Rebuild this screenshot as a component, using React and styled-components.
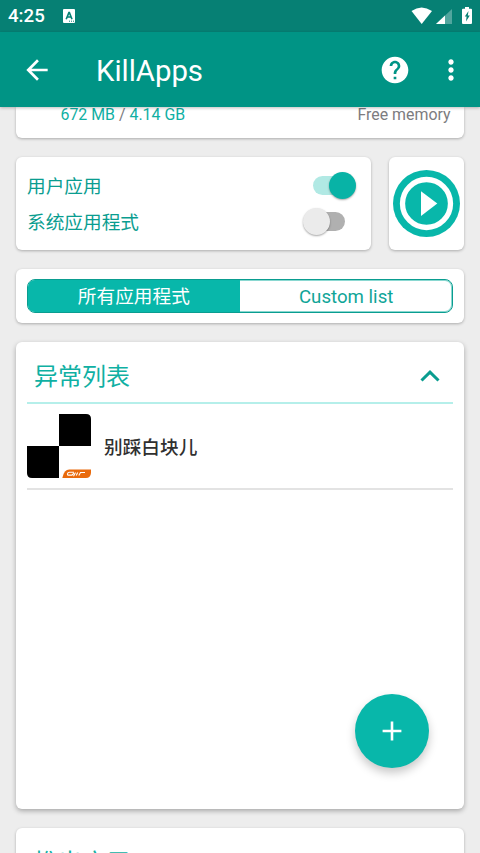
import styled, { createGlobalStyle } from 'styled-components';
import { MdArrowBack, MdHelp, MdMoreVert } from 'react-icons/md';

function App() {
  return (
    <>
      <GlobalStyle />
      <Screen>
        <StatusBar />
        <Toolbar />
        <Content>
          <MemoryCard>
            <p>
              <Teal>672 MB</Teal> / <Teal>4.14 GB</Teal>
            </p>
            <p>Free memory</p>
          </MemoryCard>
          <OptionsRow>
            <SwitchCard>
              <Option label="用户应用" checked />
              <Option label="系统应用程式" />
            </SwitchCard>
            <PlayCard>
              <PlayIcon />
            </PlayCard>
          </OptionsRow>
          <TabsCard>
            <Tabs>
              <Tab $active>所有应用程式</Tab>
              <Tab>Custom list</Tab>
            </Tabs>
          </TabsCard>
          <ListCard>
            <ListHeader>
              <h2>异常列表</h2>
              <ChevronIcon />
            </ListHeader>
            <ListItem>
              <PianoIcon />
              <ItemName>别踩白块儿</ItemName>
            </ListItem>
            <AddButton aria-label="Add">
              <svg width="20" height="20" viewBox="0 0 20 20">
                <path d="M10 .6v18.8M.6 10h18.8" stroke="#fff" strokeWidth="2.6" />
              </svg>
            </AddButton>
          </ListCard>
          <NextCard>
            <ListHeader>
              <h2>推出应用</h2>
            </ListHeader>
          </NextCard>
        </Content>
      </Screen>
    </>
  );
}

function StatusBar() {
  return (
    <StyledStatusBar>
      <Clock>4:25</Clock>
      <svg width="12" height="14" viewBox="0 0 12 14">
        <rect width="12" height="14" rx="1" fill="#fff" />
        <path
          d="M3.2 10.2 5.9 3.6h.5l2.6 6.6M4.2 8h3.8"
          fill="none"
          stroke="#068074"
          strokeWidth="1.6"
        />
        <path d="M6 12.2h1M8 12.2h1M10 12.2h1" stroke="#068074" />
      </svg>
      <StatusIcons>
        <svg width="61" height="20" viewBox="0 0 61 20">
          <path d="M.5 5Q10.500-2 21 5L10.700 18Z" fill="#fff" />
          <path d="M41 3v15H25Z" fill="#fff" opacity=".3" />
          <path d="M34 9.500V18h-9Z" fill="#fff" />
          <path
            d="M52 2.700h2V1h4v1.700h2q1 0 1 1V17q0 1-1 1h-8q-1 0-1-1V3.700q0-1 1-1Z"
            fill="#fff"
          />
          <path d="M57.500 5 53.800 10.500h1.800L55 15.500l3.800-6h-2Z" fill="#068074" />
        </svg>
      </StatusIcons>
    </StyledStatusBar>
  );
}

function Toolbar() {
  return (
    <StyledToolbar>
      <MdArrowBack size={32} />
      <h1>KillApps</h1>
      <MdHelp size={32} />
      <MdMoreVert size={32} />
    </StyledToolbar>
  );
}

function Option({ label, checked = false }) {
  return (
    <StyledOption>
      <OptionLabel>{label}</OptionLabel>
      <Switch $checked={checked}>
        <Thumb $checked={checked} />
      </Switch>
    </StyledOption>
  );
}

function PlayIcon() {
  return (
    <svg width="67" height="67" viewBox="0 0 67 67">
      <circle cx="33.500" cy="33.500" r="33.500" fill="#08b7aa" />
      <circle cx="33.500" cy="33.500" r="24" fill="#08b7aa" stroke="#fff" strokeWidth="5.300" />
      <path d="M28 21.300v24.600l16.300-12.300Z" fill="#fff" />
    </svg>
  );
}

function ChevronIcon() {
  return (
    <svg width="20" height="12" viewBox="0 0 20 12">
      <path d="m1.500 10.500 8.500-8.300 8.500 8.300" fill="none" stroke="#0a9d90" strokeWidth="3" />
    </svg>
  );
}

function PianoIcon() {
  return (
    <svg width="64" height="64" viewBox="0 0 64 64">
      <path d="M32 0h27q5 0 5 5v27H32Z" />
      <path d="M0 32h32v32H5q-5 0-5-5Z" />
      <path d="M35.300 64q1.800-8.400 7-8.400H64V59q-.5 5-5 5Z" fill="#e96a0c" />
      <path
        d="M47 58.300h-4.500q-1.700 0-2 1.500-.3 1.300 1.200 1.300h3.300l1.800-2M46.500 62.300l2-3.800M49.200 61.500l1.500-3M51.800 61.500l1.700-3H58"
        fill="none"
        stroke="#fff"
        strokeWidth="1.100"
      />
    </svg>
  );
}

const GlobalStyle = createGlobalStyle`
  * {
    box-sizing: border-box;
  }

  body,
  h1,
  h2,
  p {
    margin: 0;
  }

  body {
    font-family: Roboto, 'Noto Sans CJK SC', sans-serif;
    background-color: #ededed;
  }
`;

const Screen = styled.div`
  height: 853px;
  display: flex;
  flex-direction: column;
  overflow: hidden;
`;

const StyledStatusBar = styled.header`
  flex: none;
  height: 32px;
  padding: 0 8px;
  display: flex;
  align-items: center;
  background-color: #068074;
  color: #fff;
`;

const Clock = styled.span`
  width: 55px;
  padding-top: 1px;
  font-size: 18.67px;
  font-weight: 500;
  line-height: 31px;
`;

const StatusIcons = styled.div`
  height: 20px;
  margin-left: auto;
`;

const StyledToolbar = styled.nav`
  flex: none;
  z-index: 1;
  height: 74.67px;
  padding: 1px 13px 0 21.33px;
  display: flex;
  align-items: center;
  background-color: #009485;
  color: #fff;
  box-shadow: 0 1px 3px rgba(0, 0, 0, 0.25);

  h1 {
    flex: 1;
    margin-left: 42.67px;
    padding-top: 3px;
    font-size: 29.33px;
    font-weight: 400;
  }

  svg:last-child {
    margin-left: 24px;
  }
`;

const Content = styled.main`
  flex: 1;
  min-height: 0;
  padding: 0 16px;
  display: flex;
  flex-direction: column;
  gap: 18.67px;
`;

const Card = styled.section`
  flex: none;
  background-color: #fff;
  border-radius: 6px;
  box-shadow: 0 1px 3px rgba(0, 0, 0, 0.28);
`;

const MemoryCard = styled(Card)`
  height: 31.33px;
  padding: 0 13.5px 0 44.5px;
  display: flex;
  justify-content: space-between;
  border-radius: 0 0 6px 6px;
  font-size: 15.9px;
  line-height: 16px;
  color: #7c7c80;
`;

const Teal = styled.span`
  color: #0fb0a3;
`;

const OptionsRow = styled.div`
  display: flex;
  gap: 18px;
`;

const SwitchCard = styled(Card)`
  flex: 1;
  height: 93.33px;
  padding: 11px 11px 10px;
`;

const PlayCard = styled(Card)`
  width: 75px;
  display: flex;
  align-items: center;
  justify-content: center;
`;

const StyledOption = styled.div`
  height: 36px;
  padding-right: 15px;
  display: flex;
  align-items: center;
  justify-content: space-between;
  font-size: 18.67px;
  color: #0a9d90;
`;

const OptionLabel = styled.span`
  padding-bottom: 2px;
`;

const Switch = styled.div`
  width: 32px;
  height: 19px;
  display: flex;
  align-items: center;
  justify-content: ${({ $checked }) => ($checked ? 'flex-end' : 'flex-start')};
  border-radius: 10px;
  background-color: ${({ $checked }) => ($checked ? '#b1e9e4' : '#b0b0b0')};
`;

const Thumb = styled.span`
  flex: none;
  width: 27px;
  height: 27px;
  margin: 0 -10.5px;
  border-radius: 50%;
  background-color: ${({ $checked }) => ($checked ? '#08b3a6' : '#ebebeb')};
  box-shadow: 0 1px 2px rgba(0, 0, 0, 0.35);
`;

const TabsCard = styled(Card)`
  height: 54.67px;
  padding: 10.67px;
`;

const Tabs = styled.div`
  height: 34px;
  display: flex;
  border: 1px solid #0a9d90;
  border-radius: 8px;
  box-shadow: inset 0 0 0 1px #8ad8d1;
  overflow: hidden;
`;

const Tab = styled.button`
  flex: 1;
  padding: 2px 0 0;
  border: none;
  font-family: inherit;
  font-size: 18.67px;
  line-height: 30px;
  color: ${({ $active }) => ($active ? '#fff' : '#0fa598')};
  background-color: ${({ $active }) => ($active ? '#08b7aa' : 'transparent')};
`;

const ListCard = styled(Card)`
  position: relative;
  height: 467.33px;
  padding: 0 11px;
  box-shadow: 0 2px 5px rgba(0, 0, 0, 0.3);
`;

const ListHeader = styled.div`
  height: 62px;
  padding: 6px 13px 0 7px;
  display: flex;
  align-items: center;
  justify-content: space-between;
  border-bottom: 2px solid #b5efea;

  h2 {
    padding-bottom: 1px;
    font-size: 24px;
    font-weight: 400;
    color: #0fb0a3;
  }

  svg {
    margin-top: 2px;
  }
`;

const ListItem = styled.div`
  height: 86.5px;
  display: flex;
  align-items: center;
  border-bottom: 2px solid #e3e3e3;
`;

const ItemName = styled.span`
  margin-left: 13px;
  padding-bottom: 1px;
  font-size: 18.67px;
  font-weight: 500;
  color: #303030;
`;

/* floats over the list, pinned to the card's corner */
const AddButton = styled.button`
  position: absolute;
  right: 34.67px;
  bottom: 41px;
  width: 74.67px;
  height: 74.67px;
  padding: 0;
  display: flex;
  align-items: center;
  justify-content: center;
  border: none;
  border-radius: 50%;
  background-color: #08b7aa;
  box-shadow: 0 5px 10px rgba(0, 0, 0, 0.22);
`;

const NextCard = styled(Card)`
  height: 120px;
  padding: 0 11px;
`;

export default App;
